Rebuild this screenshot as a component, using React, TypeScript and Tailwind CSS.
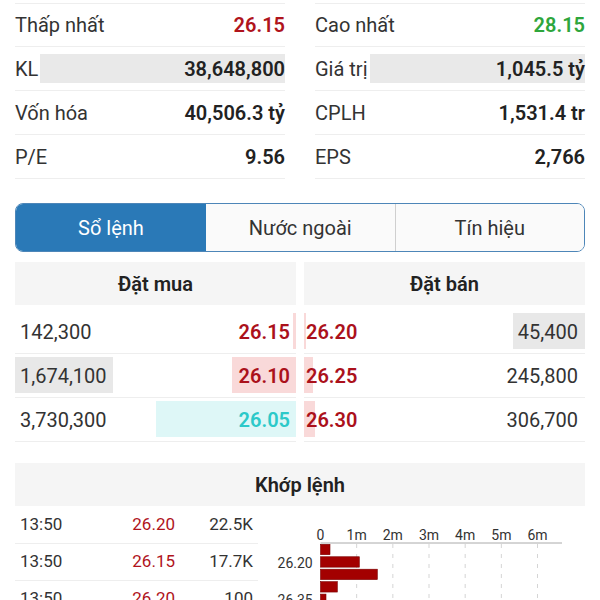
import React from "react";

const stats = [
  [
    { label: "Thấp nhất", value: "26.15", color: "text-[#b0141c]" },
    { label: "Cao nhất", value: "28.15", color: "text-[#2ea63c]" },
  ],
  [
    { label: "KL", value: "38,648,800", bar: true },
    { label: "Giá trị", value: "1,045.5 tỷ", bar: true },
  ],
  [
    { label: "Vốn hóa", value: "40,506.3 tỷ" },
    { label: "CPLH", value: "1,531.4 tr" },
  ],
  [
    { label: "P/E", value: "9.56" },
    { label: "EPS", value: "2,766" },
  ],
];

const bids = [
  { qty: "142,300", price: "26.15", qtyBar: 0, priceBar: 3, cyan: false },
  { qty: "1,674,100", price: "26.10", qtyBar: 98, priceBar: 64, cyan: false },
  { qty: "3,730,300", price: "26.05", qtyBar: 0, priceBar: 140, cyan: true },
];

const asks = [
  { qty: "45,400", price: "26.20", qtyBar: 72, priceBar: 2 },
  { qty: "245,800", price: "26.25", qtyBar: 0, priceBar: 9 },
  { qty: "306,700", price: "26.30", qtyBar: 0, priceBar: 11 },
];

const trades = [
  { time: "13:50", price: "26.20", vol: "22.5K" },
  { time: "13:50", price: "26.15", vol: "17.7K" },
  { time: "13:50", price: "26.20", vol: "100" },
];

function StatRow({ item, first }: { item: any; first: boolean }) {
  return (
    <div
      className={`flex h-[44px] items-center border-b border-[#eeeeee] ${
        first ? "border-t" : ""
      }`}
    >
      <span className="text-[20px] text-[#333]">{item.label}</span>
      <div
        className={`ml-[2px] flex h-[29px] flex-1 items-center justify-end ${
          item.bar ? "bg-[#e9e9e9]" : ""
        }`}
      >
        <span className={`text-[20px] font-semibold ${item.color || "text-[#222]"}`}>
          {item.value}
        </span>
      </div>
    </div>
  );
}

function DepthChart() {
  const ticks = ["0", "1m", "2m", "3m", "4m", "5m", "6m"];
  const x0 = 62.5;
  const step = 36.17;
  const bars = [9.5, 38.8, 56.8, 16.8, 5.5];
  return (
    <svg width="327" height="100" className="block">
      {ticks.map((t, i) => (
        <text
          key={t}
          x={x0 + i * step}
          y={34}
          textAnchor="middle"
          fontSize="14"
          fill="#333"
          fontFamily="Roboto, sans-serif"
        >
          {t}
        </text>
      ))}
      <line x1={x0} y1={37} x2={304} y2={37} stroke="#aaa" strokeWidth="1" />
      {ticks.slice(1).map((t, i) => (
        <line
          key={t}
          x1={x0 + (i + 1) * step}
          y1={38}
          x2={x0 + (i + 1) * step}
          y2={100}
          stroke="#d5d5d5"
          strokeWidth="1"
          strokeDasharray="4 6"
        />
      ))}
      {bars.map((w, i) => (
        <rect
          key={i}
          x={x0}
          y={38.3 + i * 12.45}
          width={w}
          height={10.4}
          fill="#a30000"
          stroke="#7a0000"
          strokeWidth="0.6"
        />
      ))}
      <text x={54.7} y={61.5} textAnchor="end" fontSize="14" fill="#333" fontFamily="Roboto, sans-serif">
        26.20
      </text>
      <text x={54.7} y={99} textAnchor="end" fontSize="14" fill="#333" fontFamily="Roboto, sans-serif">
        26.35
      </text>
    </svg>
  );
}

export default function App() {
  return (
    <div className="h-[600px] w-[600px] overflow-hidden bg-white font-['Roboto',sans-serif]">
      {/* thông số */}
      <div className="grid grid-cols-2 gap-x-[30px] px-[15px] pt-[3px]">
        <div>
          {stats.map((r, i) => (
            <StatRow key={i} item={r[0]} first={i === 0} />
          ))}
        </div>
        <div>
          {stats.map((r, i) => (
            <StatRow key={i} item={r[1]} first={i === 0} />
          ))}
        </div>
      </div>

      {/* tabs */}
      <div className="mx-[15px] mt-[24px] flex h-[49px] overflow-hidden rounded-[8px] border border-[#4d86b8]">
        <div className="flex w-[190px] items-center justify-center bg-[#2a79b7] text-[20px] text-white">
          Sổ lệnh
        </div>
        <div className="flex flex-1 items-center justify-center border-r border-[#cfcfcf] bg-[#fafafa] text-[20px] text-[#333]">
          Nước ngoài
        </div>
        <div className="flex flex-1 items-center justify-center bg-[#fafafa] text-[20px] text-[#333]">
          Tín hiệu
        </div>
      </div>

      {/* sổ lệnh */}
      <div className="mx-[15px] mt-[10px] grid grid-cols-2 gap-x-[8px]">
        <div>
          <div className="flex h-[43px] items-center justify-center bg-[#f5f5f5] text-[20px] font-semibold text-[#222]">
            Đặt mua
          </div>
          <div className="mt-[5px]">
            {bids.map((b) => (
              <div
                key={b.price}
                className="relative flex h-[44px] items-center justify-between border-b border-[#eeeeee] pl-[5px] pr-[6px]"
              >
                {b.qtyBar > 0 && (
                  <div
                    className="absolute left-0 top-[3px] bottom-[4px] bg-[#e8e8e8]"
                    style={{ width: b.qtyBar }}
                  />
                )}
                <div
                  className={`absolute right-0 top-[3px] bottom-[4px] ${
                    b.cyan ? "bg-[#def7f7]" : "bg-[#f9d9d9]"
                  }`}
                  style={{ width: b.priceBar }}
                />
                <span className="relative text-[20px] text-[#333]">{b.qty}</span>
                <span
                  className={`relative text-[20px] font-semibold ${
                    b.cyan ? "text-[#2cc9c9]" : "text-[#ab111b]"
                  }`}
                >
                  {b.price}
                </span>
              </div>
            ))}
          </div>
        </div>
        <div>
          <div className="flex h-[43px] items-center justify-center bg-[#f5f5f5] text-[20px] font-semibold text-[#222]">
            Đặt bán
          </div>
          <div className="mt-[5px]">
            {asks.map((a) => (
              <div
                key={a.price}
                className="relative flex h-[44px] items-center justify-between border-b border-[#eeeeee] pl-[2px] pr-[7px]"
              >
                <div
                  className="absolute left-0 top-[3px] bottom-[4px] bg-[#f9d9d9]"
                  style={{ width: a.priceBar }}
                />
                {a.qtyBar > 0 && (
                  <div
                    className="absolute right-0 top-[3px] bottom-[4px] bg-[#e8e8e8]"
                    style={{ width: a.qtyBar }}
                  />
                )}
                <span className="relative text-[20px] font-semibold text-[#ab111b]">{a.price}</span>
                <span className="relative text-[20px] text-[#333]">{a.qty}</span>
              </div>
            ))}
          </div>
        </div>
      </div>

      {/* khớp lệnh */}
      <div className="mx-[15px] mt-[21px]">
        <div className="flex h-[43px] items-center justify-center bg-[#f5f5f5] text-[20px] font-semibold text-[#222]">
          Khớp lệnh
        </div>
        <div className="flex">
          <div className="w-[243px] pt-[1px]">
            {trades.map((t, i) => (
              <div
                key={i}
                className="flex h-[37px] items-center border-b border-[#eeeeee] pl-[5px] pr-[5px] text-[17px]"
              >
                <span className="w-[105px] text-[#333]">{t.time}</span>
                <span className="w-[50px] text-right text-[#b0141c]">{t.price}</span>
                <span className="flex-1 text-right text-[#333]">{t.vol}</span>
              </div>
            ))}
          </div>
          <DepthChart />
        </div>
      </div>
    </div>
  );
}
